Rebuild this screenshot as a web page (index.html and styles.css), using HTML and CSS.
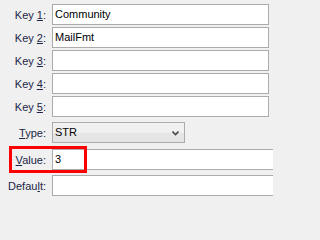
FILE: index.html
```html
<!DOCTYPE html>
<html>
<head>
<meta charset="utf-8">
<link rel="stylesheet" href="styles.css">
</head>
<body>
<div class="form">
  <div class="row r-key"><label class="lbl">Key <u>1</u>:</label><div class="field key">Community</div></div>
  <div class="row r-key"><label class="lbl">Key <u>2</u>:</label><div class="field key">MailFmt</div></div>
  <div class="row r-key"><label class="lbl">Key <u>3</u>:</label><div class="field key"></div></div>
  <div class="row r-key"><label class="lbl">Key <u>4</u>:</label><div class="field key"></div></div>
  <div class="row r-key"><label class="lbl">Key <u>5</u>:</label><div class="field key"></div></div>
  <div class="row r-type"><label class="lbl"><u>T</u>ype:</label>
    <div class="combo"><span class="combo-text">STR</span>
      <svg class="chev" width="7" height="5" viewBox="0 0 7 5"><path d="M0.5 0.5 L3.5 3.5 L6.5 0.5" fill="none" stroke="#4a4a4a" stroke-width="1.6"/></svg>
    </div>
  </div>
  <div class="row r-value"><label class="lbl"><u>V</u>alue:</label><div class="field wide">3</div><div class="highlight"></div></div>
  <div class="row r-default"><label class="lbl">Defau<u>l</u>t:</label><div class="field wide"></div></div>
</div>
</body>
</html>
```
FILE: styles.css
```css
html, body {
  margin: 0;
  padding: 0;
  background: #f0f0f0;
  overflow: hidden;
  width: 273px;
  height: 200px;
}
body {
  font-family: "Liberation Sans", Arial, sans-serif;
  font-size: 11px;
  color: #000;
}
.form {
  display: flex;
  flex-direction: column;
  padding-top: 4px;
}
.row {
  position: relative;
  display: flex;
  align-items: center;
  height: 21px;
}
.r-key { margin-bottom: 2px; }
.r-key:nth-child(5) { margin-bottom: 5px; }
.r-type { margin-bottom: 6px; }
.r-value { margin-bottom: 5px; }
.lbl {
  width: 46px;
  text-align: right;
  margin-right: 6px;
  color: #1c2546;
  flex: none;
  white-space: nowrap;
}
.lbl u { text-underline-offset: 1px; }
.field {
  box-sizing: border-box;
  height: 21px;
  background: #fff;
  border: 1px solid #ababab;
  padding: 0 2px;
  line-height: 19px;
  flex: none;
  white-space: nowrap;
}
.field.key { width: 217px; }
.field.wide { width: 240px; }
.combo {
  box-sizing: border-box;
  width: 133px;
  height: 21px;
  border: 1px solid #acacac;
  background: linear-gradient(#f0f0f0 0, #f0f0f0 50%, #e5e5e5 50%, #e5e5e5 100%);
  display: flex;
  align-items: center;
  justify-content: space-between;
  padding: 0 5px 0 2px;
  flex: none;
}
.combo-text { line-height: 19px; }
.chev { display: block; margin-top: 1px; }
.highlight {
  position: absolute;
  left: 9px;
  top: -3px;
  width: 78px;
  height: 27px;
  box-sizing: border-box;
  border: 3px solid #ff0000;
  pointer-events: none;
}
```
